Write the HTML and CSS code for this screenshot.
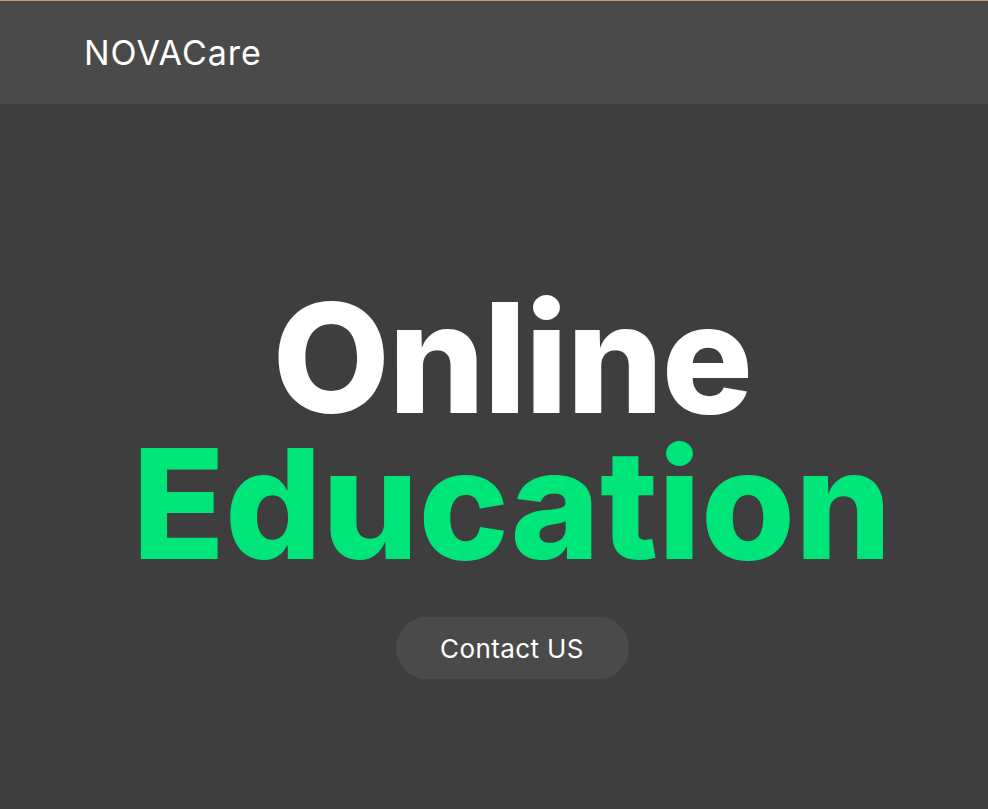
FILE: index.html
```html
<!DOCTYPE html>
<html lang="en">
<head>
<meta charset="utf-8">
<title>NOVACare</title>
<link rel="stylesheet" href="styles.css">
</head>
<body>
<header class="topbar">
  <div class="brand">NOVACare</div>
</header>
<main class="hero">
  <h1 class="title">
    <span class="line line-white">Online</span>
    <span class="line line-green">Education</span>
  </h1>
  <a class="cta" href="#">Contact US</a>
</main>
</body>
</html>
```

FILE: styles.css
```css
* { box-sizing: border-box; }
html, body {
  margin: 0;
  padding: 0;
  height: 100%;
}
body {
  background: #3e3e3e;
  font-family: "Inter", "Roboto", sans-serif;
  color: #ffffff;
  border-top: 1px solid #c99a76;
}
.topbar {
  height: 103px;
  background: #4a4a4a;
  display: flex;
  align-items: center;
  padding-left: 84px;
}
.brand {
  font-size: 34px;
  font-weight: 400;
  letter-spacing: 1px;
  color: #ffffff;
}
.hero {
  display: flex;
  flex-direction: column;
  align-items: center;
  padding-top: 181px;
  padding-left: 36px;
}
.title {
  margin: 0;
  display: flex;
  flex-direction: column;
  align-items: center;
  font-weight: 800;
  font-size: 152px;
  line-height: 146px;
}
.line-white { color: #ffffff; letter-spacing: -1.5px; }
.line-green { color: #00e57a; }
.cta {
  margin-top: 40px;
  width: 233px;
  height: 62px;
  border-radius: 31px;
  background: #4a4a4a;
  color: #ffffff;
  text-decoration: none;
  font-size: 26px;
  letter-spacing: 0.4px;
  display: flex;
  align-items: center;
  justify-content: center;
}
```
